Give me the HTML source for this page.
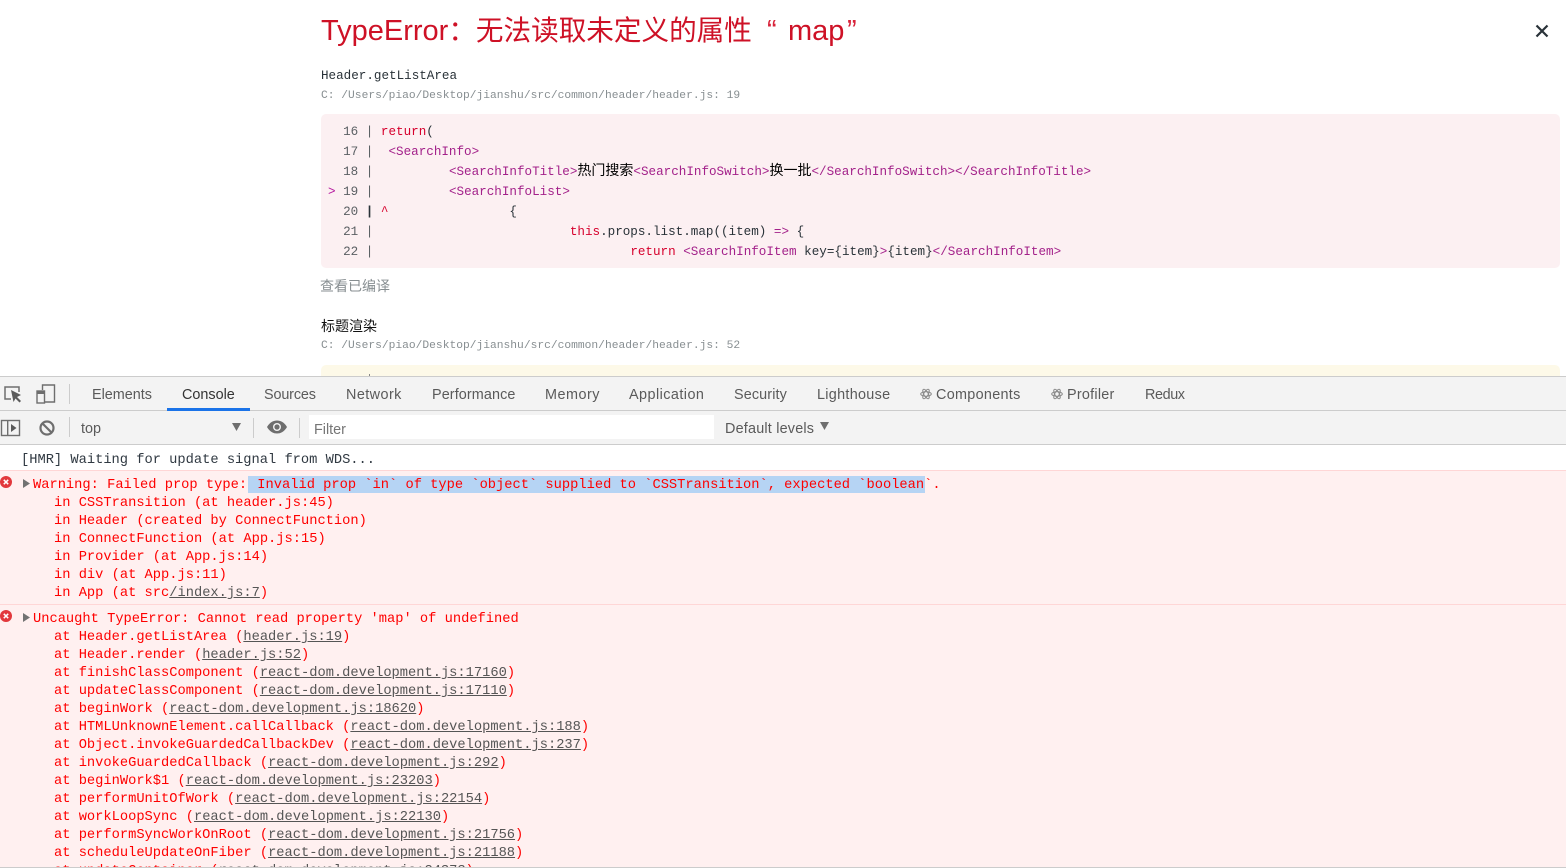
<!DOCTYPE html>
<html><head><meta charset="utf-8">
<style>
html,body{margin:0;padding:0;width:1566px;height:868px;overflow:hidden;background:#fff}
body{position:relative;font-family:"Liberation Sans","Noto Sans CJK SC",sans-serif}
.a{position:absolute;white-space:pre}
.m{font-family:"Liberation Mono","Noto Sans CJK SC",monospace}
.code{left:328px;font-size:12.6px;line-height:20px;color:#293238;font-family:"Liberation Mono","Noto Sans CJK SC",monospace}
.g{color:#5a5f63}
.t{color:#a3218a}
.k{color:#d6002c}
.z{font-size:14px;color:#000}
.tab{position:absolute;top:386px;font-size:14.4px;line-height:18px;color:#5a5a5a;white-space:pre}
.c{position:absolute;white-space:pre;font:13.73px/18px "Liberation Mono",monospace;color:#f00}
.c u{color:#555;text-decoration:underline}
.ti{font-size:29px;line-height:38px;color:#ce1126;top:12px}
</style></head><body>
<div class="a ti" style="left:321px">TypeError<span style="font-size:27.6px">：无法读取未定义的属性</span></div>
<div class="a ti" style="left:767px;font-weight:normal;color:#d8233a">“</div>
<div class="a ti" style="left:788px">map</div>
<div class="a ti" style="left:847px;color:#d8233a">”</div>
<svg class="a" style="left:1535px;top:24px" width="14" height="14" viewBox="0 0 14 14"><path d="M1.5 1.5L12.5 12.5M12.5 1.5L1.5 12.5" stroke="#293238" stroke-width="2.2" fill="none"/></svg>
<div class="a m" style="left:321px;top:67px;font-size:12.6px;line-height:18px;color:#293238">Header.getListArea</div>
<div class="a m" style="left:321px;top:88px;font-size:11.27px;line-height:16px;color:#878e91">C: /Users/piao/Desktop/jianshu/src/common/header/header.js: 19</div>
<div class="a" style="left:321px;top:114px;width:1239px;height:154px;background:#fcf0f2;border-radius:5px"></div>
<div class="a code" style="top:122px"><span class="g">  16 | </span><span class="k">return</span>(</div>
<div class="a code" style="top:142px"><span class="g">  17 | </span> <span class="t">&lt;SearchInfo&gt;</span></div>
<div class="a code" style="top:162px"><span class="g">  18 | </span>         <span class="t">&lt;SearchInfoTitle&gt;</span><span class="z">热门搜索</span><span class="t">&lt;SearchInfoSwitch&gt;</span><span class="z">换一批</span><span class="t">&lt;/SearchInfoSwitch&gt;&lt;/SearchInfoTitle&gt;</span></div>
<div class="a code" style="top:182px"><span class="k" style="color:#b5179e">&gt;</span><span class="g"> 19 | </span>         <span class="t">&lt;SearchInfoList&gt;</span></div>
<div class="a code" style="top:202px"><span class="g">  20 </span><span style="color:#293238;font-weight:bold">|</span> <span class="k">^</span>                {</div>
<div class="a code" style="top:222px"><span class="g">  21 | </span>                         <span class="k">this</span>.props.list.map((item) <span class="t">=&gt;</span> {</div>
<div class="a code" style="top:242px"><span class="g">  22 | </span>                                 <span class="k">return</span> <span class="t">&lt;SearchInfoItem</span> key={item}<span class="t">&gt;</span>{item}<span class="t">&lt;/SearchInfoItem&gt;</span></div>
<div class="a" style="left:320px;top:276px;font-size:14px;line-height:20px;color:#878e91">查看已编译</div>
<div class="a" style="left:321px;top:316px;font-size:14px;line-height:20px;color:#111">标题渲染</div>
<div class="a m" style="left:321px;top:338px;font-size:11.27px;line-height:16px;color:#878e91">C: /Users/piao/Desktop/jianshu/src/common/header/header.js: 52</div>
<div class="a" style="left:321px;top:365px;width:1239px;height:20px;background:#fdf9e8;border-radius:5px"></div>
<div class="a" style="left:369px;top:374px;width:1px;height:2px;background:#888"></div>

<!-- DevTools -->
<div class="a" style="left:0;top:376px;width:1566px;height:492px;background:#fff"></div>
<div class="a" style="left:0;top:376px;width:1566px;height:69px;background:#f3f3f3;border-top:1px solid #ccc;box-sizing:border-box"></div>
<div class="a" style="left:0;top:410px;width:1566px;height:1px;background:#ccc"></div>
<div class="a" style="left:0;top:444px;width:1566px;height:1px;background:#ccc"></div>
<div class="a" style="left:167px;top:408px;width:83px;height:3px;background:#1a73e8"></div>

<svg class="a" style="left:0;top:380px" width="70" height="30" viewBox="0 0 70 30" fill="none">
<path d="M11 19H5V7H19V12" stroke="#6e6e6e" stroke-width="1.5"/>
<path d="M11 10L21 15L17 17L21 21L19.5 22.5L15.5 18.5L13.5 22Z" fill="#5a5a5a"/>
<path d="M42.5 10V5H54.5V22H45" stroke="#6e6e6e" stroke-width="1.4"/>
<rect x="37" y="11" width="7.5" height="12" stroke="#6e6e6e" stroke-width="1.4"/>
<rect x="37" y="11" width="7.5" height="3" fill="#6e6e6e"/>
<rect x="69" y="4" width="1" height="20" fill="#ccc"/>
</svg>
<svg class="a" style="left:0;top:412px" width="70" height="32" viewBox="0 0 70 32" fill="none">
<rect x="1.5" y="8.5" width="18" height="15" stroke="#6e6e6e" stroke-width="1.4"/>
<rect x="7" y="8" width="1.4" height="16" fill="#6e6e6e"/>
<path d="M11 12L16.5 16L11 20Z" fill="#5a5a5a"/>
<circle cx="47" cy="16" r="6.5" stroke="#6e6e6e" stroke-width="2.2"/>
<path d="M42.5 11.5L51.5 20.5" stroke="#6e6e6e" stroke-width="2.2"/>
<rect x="69" y="5" width="1" height="20" fill="#ccc"/>
</svg>

<div class="tab" style="left:92px">Elements</div>
<div class="tab" style="left:182px;color:#333">Console</div>
<div class="tab" style="left:264px;letter-spacing:-.14px">Sources</div>
<div class="tab" style="left:346px;letter-spacing:.43px">Network</div>
<div class="tab" style="left:432px;letter-spacing:.1px">Performance</div>
<div class="tab" style="left:545px;letter-spacing:.5px">Memory</div>
<div class="tab" style="left:629px;letter-spacing:.45px">Application</div>
<div class="tab" style="left:734px;letter-spacing:.12px">Security</div>
<div class="tab" style="left:817px;letter-spacing:.3px">Lighthouse</div>
<svg class="a" style="left:920px;top:388px" width="12" height="12" viewBox="0 0 12 12" fill="none" stroke="#8a8a8a" stroke-width="1"><ellipse cx="6" cy="6" rx="5.3" ry="2.2"/><ellipse cx="6" cy="6" rx="5.3" ry="2.2" transform="rotate(60 6 6)"/><ellipse cx="6" cy="6" rx="5.3" ry="2.2" transform="rotate(120 6 6)"/></svg>
<div class="tab" style="left:936px;letter-spacing:.3px">Components</div>
<svg class="a" style="left:1051px;top:388px" width="12" height="12" viewBox="0 0 12 12" fill="none" stroke="#8a8a8a" stroke-width="1"><ellipse cx="6" cy="6" rx="5.3" ry="2.2"/><ellipse cx="6" cy="6" rx="5.3" ry="2.2" transform="rotate(60 6 6)"/><ellipse cx="6" cy="6" rx="5.3" ry="2.2" transform="rotate(120 6 6)"/></svg>
<div class="tab" style="left:1067px;letter-spacing:.25px">Profiler</div>
<div class="tab" style="left:1145px;letter-spacing:-.4px">Redux</div>

<div class="tab" style="left:81px;top:420px">top</div>
<svg class="a" style="left:232px;top:423px" width="10" height="9" viewBox="0 0 10 9"><path d="M0 0H9L4.5 8Z" fill="#6e6e6e"/></svg>
<div class="a" style="left:253px;top:418px;width:1px;height:20px;background:#ccc"></div>
<svg class="a" style="left:267px;top:420px" width="20" height="14" viewBox="0 0 20 14"><path d="M0 7C3 2 6.500 .5 10 .5S17 2 20 7C17 12 13.500 13.500 10 13.500S3 12 0 7Z" fill="#6e6e6e"/><circle cx="10" cy="7" r="4" fill="#f3f3f3"/><circle cx="10" cy="7" r="2.600" fill="#6e6e6e"/></svg>
<div class="a" style="left:299px;top:418px;width:1px;height:20px;background:#ccc"></div>
<div class="a" style="left:309px;top:415px;width:405px;height:24px;background:#fff"></div>
<div class="tab" style="left:314px;top:421px;color:#757575">Filter</div>
<div class="tab" style="left:725px;top:420px;letter-spacing:.2px">Default levels</div>
<svg class="a" style="left:820px;top:422px" width="9" height="8" viewBox="0 0 9 8"><path d="M0 0H9L4.500 8Z" fill="#6e6e6e"/></svg>

<!-- Console -->
<div class="c" style="left:21px;top:452px;color:#303942">[HMR] Waiting for update signal from WDS...</div>
<div class="a" style="left:0;top:470px;width:1566px;height:398px;background:#fff0f0"></div>
<div class="a" style="left:0;top:470px;width:1566px;height:1px;background:#ffd6d6"></div>
<div class="a" style="left:0;top:604px;width:1566px;height:1px;background:#ffd6d6"></div>
<div class="a" style="left:248px;top:476px;width:677px;height:17px;background:#b6d4f4"></div>

<svg class="a" style="left:0;top:476px" width="12" height="12" viewBox="0 0 12 12"><circle cx="6" cy="6" r="6" fill="#e2383c"/><path d="M3.800 3.800L8.200 8.200M8.200 3.800L3.800 8.200" stroke="#fff" stroke-width="1.500"/></svg>
<svg class="a" style="left:23px;top:479px" width="8" height="9" viewBox="0 0 8 9"><path d="M0 0L7 4.500L0 9Z" fill="#727272"/></svg>
<svg class="a" style="left:0;top:610px" width="12" height="12" viewBox="0 0 12 12"><circle cx="6" cy="6" r="6" fill="#e2383c"/><path d="M3.800 3.800L8.200 8.200M8.200 3.800L3.800 8.200" stroke="#fff" stroke-width="1.500"/></svg>
<svg class="a" style="left:23px;top:613px" width="8" height="9" viewBox="0 0 8 9"><path d="M0 0L7 4.500L0 9Z" fill="#727272"/></svg>

<div class="c" style="left:33px;top:477px">Warning: Failed prop type:<span style="margin-left:2px"> Invalid prop `in` of type `object` supplied to `CSSTransition`, expected `boolean`.</span></div>
<div class="c" style="left:54px;top:495px">in CSSTransition (at header.js:45)</div>
<div class="c" style="left:54px;top:513px">in Header (created by ConnectFunction)</div>
<div class="c" style="left:54px;top:531px">in ConnectFunction (at App.js:15)</div>
<div class="c" style="left:54px;top:549px">in Provider (at App.js:14)</div>
<div class="c" style="left:54px;top:567px">in div (at App.js:11)</div>
<div class="c" style="left:54px;top:585px">in App (at src<u>/index.js:7</u>)</div>

<div class="c" style="left:33px;top:611px">Uncaught TypeError: Cannot read property 'map' of undefined</div>
<div class="c" style="left:54px;top:629px">at Header.getListArea (<u>header.js:19</u>)</div>
<div class="c" style="left:54px;top:647px">at Header.render (<u>header.js:52</u>)</div>
<div class="c" style="left:54px;top:665px">at finishClassComponent (<u>react-dom.development.js:17160</u>)</div>
<div class="c" style="left:54px;top:683px">at updateClassComponent (<u>react-dom.development.js:17110</u>)</div>
<div class="c" style="left:54px;top:701px">at beginWork (<u>react-dom.development.js:18620</u>)</div>
<div class="c" style="left:54px;top:719px">at HTMLUnknownElement.callCallback (<u>react-dom.development.js:188</u>)</div>
<div class="c" style="left:54px;top:737px">at Object.invokeGuardedCallbackDev (<u>react-dom.development.js:237</u>)</div>
<div class="c" style="left:54px;top:755px">at invokeGuardedCallback (<u>react-dom.development.js:292</u>)</div>
<div class="c" style="left:54px;top:773px">at beginWork$1 (<u>react-dom.development.js:23203</u>)</div>
<div class="c" style="left:54px;top:791px">at performUnitOfWork (<u>react-dom.development.js:22154</u>)</div>
<div class="c" style="left:54px;top:809px">at workLoopSync (<u>react-dom.development.js:22130</u>)</div>
<div class="c" style="left:54px;top:827px">at performSyncWorkOnRoot (<u>react-dom.development.js:21756</u>)</div>
<div class="c" style="left:54px;top:845px">at scheduleUpdateOnFiber (<u>react-dom.development.js:21188</u>)</div>
<div class="c" style="left:54px;top:863px">at updateContainer (<u>react-dom.development.js:24373</u>)</div>
<div class="a" style="left:0;top:867px;width:1566px;height:1px;background:#ccc"></div>
</body></html>
